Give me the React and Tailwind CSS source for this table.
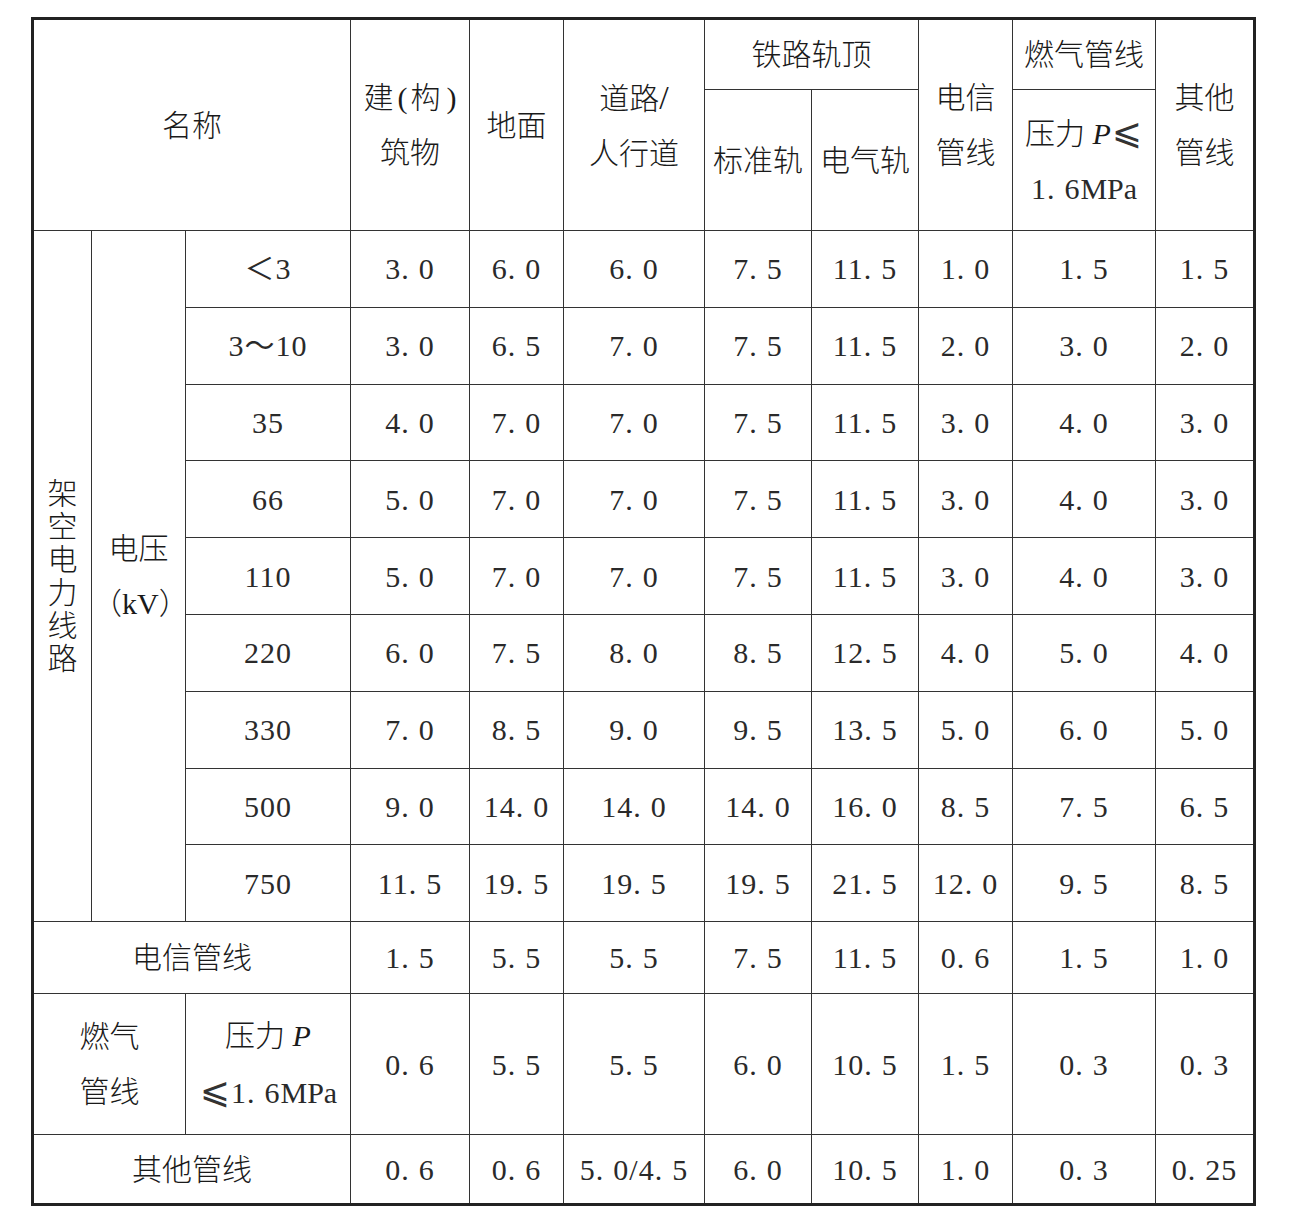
const cell = 'border border-[#333] p-0 text-center align-middle';
const cjk = 'text-[30px] leading-[55px] font-light';
const num = 'text-[30px] tracking-[1px] text-[#2a2a2a]';

const voltageRows = [
  ['＜3', ['3.0', '6.0', '6.0', '7.5', '11.5', '1.0', '1.5', '1.5']],
  ['3～10', ['3.0', '6.5', '7.0', '7.5', '11.5', '2.0', '3.0', '2.0']],
  ['35', ['4.0', '7.0', '7.0', '7.5', '11.5', '3.0', '4.0', '3.0']],
  ['66', ['5.0', '7.0', '7.0', '7.5', '11.5', '3.0', '4.0', '3.0']],
  ['110', ['5.0', '7.0', '7.0', '7.5', '11.5', '3.0', '4.0', '3.0']],
  ['220', ['6.0', '7.5', '8.0', '8.5', '12.5', '4.0', '5.0', '4.0']],
  ['330', ['7.0', '8.5', '9.0', '9.5', '13.5', '5.0', '6.0', '5.0']],
  ['500', ['9.0', '14.0', '14.0', '14.0', '16.0', '8.5', '7.5', '6.5']],
  ['750', ['11.5', '19.5', '19.5', '19.5', '21.5', '12.0', '9.5', '8.5']],
];

const telecom = ['1.5', '5.5', '5.5', '7.5', '11.5', '0.6', '1.5', '1.0'];
const gas = ['0.6', '5.5', '5.5', '6.0', '10.5', '1.5', '0.3', '0.3'];
const other = ['0.6', '0.6', '5.0/4.5', '6.0', '10.5', '1.0', '0.3', '0.25'];

// period in the source is set wide, so give it a gap after
function Num({ v }) {
  return (
    <span className={num}>
      {v.split('').map((c, i) =>
        c === '.' ? (
          <span key={i} className="mr-[9px]">.</span>
        ) : (
          <span key={i}>{c}</span>
        )
      )}
    </span>
  );
}

function Le() {
  return (
    <span className="mx-[1px] font-['DejaVu_Sans','Noto_Sans_CJK_SC',sans-serif] text-[36px] font-normal text-[#333]">
      ⩽
    </span>
  );
}

function Values({ list }) {
  return list.map((v, i) => (
    <td key={i} className={cell}>
      <Num v={v} />
    </td>
  ));
}

export default function App() {
  return (
    <div className="min-h-[1231px] bg-white pl-[31px] pt-[17px] text-[#1a1a1a] font-['Liberation_Serif','Noto_Sans_CJK_SC',serif]">
      <table className="table-fixed border-collapse border-[3px] border-[#222] w-[1222px]">
        <colgroup>
          <col className="w-[59px]" />
          <col className="w-[94px]" />
          <col className="w-[165px]" />
          <col className="w-[119px]" />
          <col className="w-[94px]" />
          <col className="w-[141px]" />
          <col className="w-[107px]" />
          <col className="w-[107px]" />
          <col className="w-[94px]" />
          <col className="w-[143px]" />
          <col className="w-[99px]" />
        </colgroup>
        <thead>
          <tr className="h-[71px]">
            <th colSpan={3} rowSpan={2} className={`${cell} ${cjk}`}>名称</th>
            <th rowSpan={2} className={`${cell} ${cjk}`}>
              <div className="whitespace-nowrap">
                建<span className="ml-[4px] mr-[3px] font-normal">(</span>构<span className="ml-[6px] font-normal">)</span>
              </div>
              <div>筑物</div>
            </th>
            <th rowSpan={2} className={`${cell} ${cjk}`}>地面</th>
            <th rowSpan={2} className={`${cell} ${cjk}`}>
              <div>
                道路<span className="text-[34px] font-normal">/</span>
              </div>
              <div>人行道</div>
            </th>
            <th colSpan={2} className={`${cell} ${cjk}`}>铁路轨顶</th>
            <th rowSpan={2} className={`${cell} ${cjk}`}>
              <div>电信</div>
              <div>管线</div>
            </th>
            <th className={`${cell} ${cjk}`}>燃气管线</th>
            <th rowSpan={2} className={`${cell} ${cjk}`}>
              <div>其他</div>
              <div>管线</div>
            </th>
          </tr>
          <tr className="h-[141px]">
            <th className={`${cell} ${cjk}`}>标准轨</th>
            <th className={`${cell} ${cjk}`}>电气轨</th>
            <th className={`${cell} ${cjk}`}>
              <div className="whitespace-nowrap">
                压力 <i className="font-normal text-[30px]">P</i>
                <Le />
              </div>
              <div className="font-normal">
                <Num v="1.6" />
                <span className="text-[30px] text-[#2a2a2a]">MPa</span>
              </div>
            </th>
          </tr>
        </thead>
        <tbody>
          {voltageRows.map(([label, vals], r) => (
            <tr key={label} className="h-[76.8px]">
              {r === 0 && (
                <>
                  <td rowSpan={9} className={cell}>
                    <div className="flex flex-col items-center text-[30px] leading-[33px] font-light">
                      {'架空电力线路'.split('').map((c) => (
                        <span key={c}>{c}</span>
                      ))}
                    </div>
                  </td>
                  <td rowSpan={9} className={`${cell} ${cjk}`}>
                    <div>电压</div>
                    <div className="whitespace-nowrap font-normal">
                      <span className="font-light">（</span>
                      <span className="text-[30px]">kV</span>
                      <span className="font-light">）</span>
                    </div>
                  </td>
                </>
              )}
              <td className={cell}>
                <span className="text-[30px] tracking-[1px] text-[#2a2a2a]">{label}</span>
              </td>
              <Values list={vals} />
            </tr>
          ))}
          <tr className="h-[72px]">
            <td colSpan={3} className={`${cell} ${cjk}`}>电信管线</td>
            <Values list={telecom} />
          </tr>
          <tr className="h-[141px]">
            <td colSpan={2} className={`${cell} ${cjk}`}>
              <div>燃气</div>
              <div>管线</div>
            </td>
            <td className={`${cell} ${cjk}`}>
              <div>
                压力 <i className="font-normal text-[30px]">P</i>
              </div>
              <div className="whitespace-nowrap font-normal">
                <Le />
                <Num v="1.6" />
                <span className="text-[30px] text-[#2a2a2a]">MPa</span>
              </div>
            </td>
            <Values list={gas} />
          </tr>
          <tr className="h-[70px]">
            <td colSpan={3} className={`${cell} ${cjk}`}>其他管线</td>
            <Values list={other} />
          </tr>
        </tbody>
      </table>
    </div>
  );
}
